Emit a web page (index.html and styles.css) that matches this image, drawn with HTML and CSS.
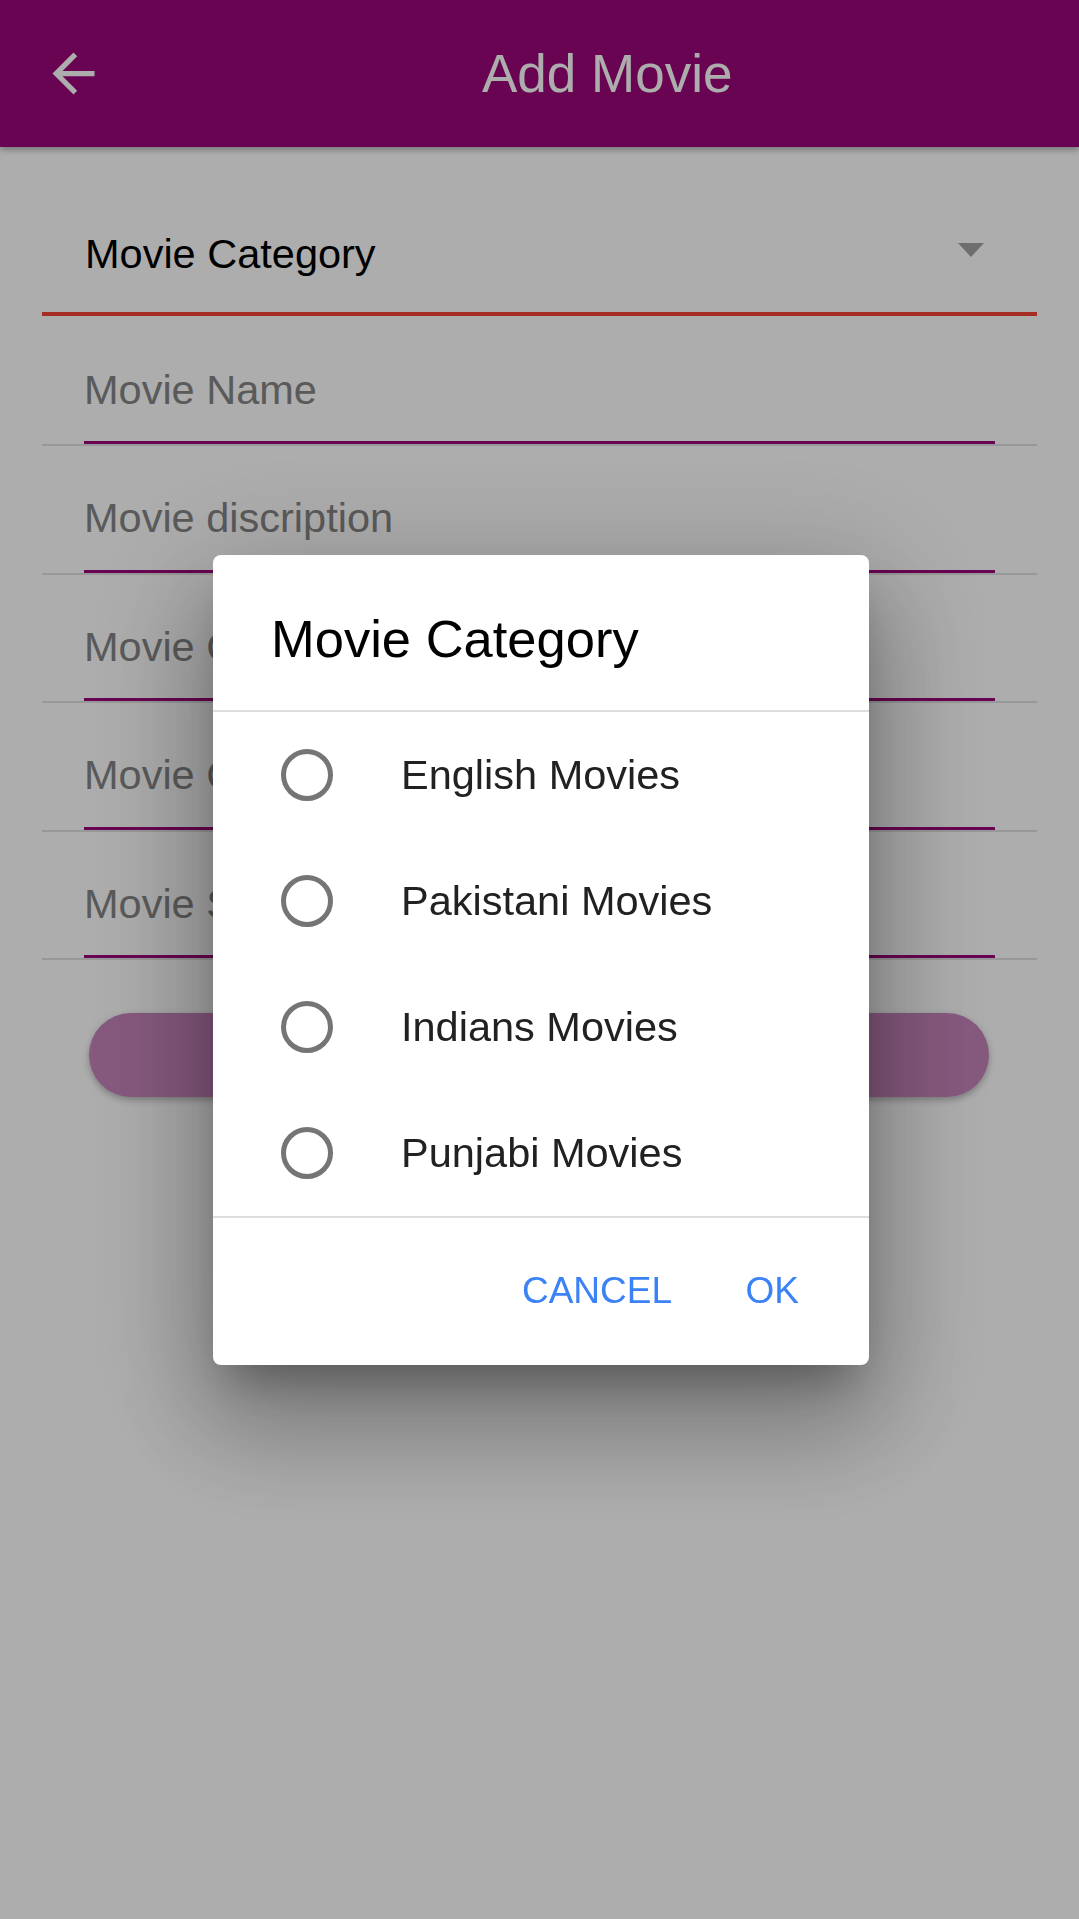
FILE: index.html
```html
<!DOCTYPE html>
<html lang="en">
<head>
<meta charset="utf-8">
<title>Add Movie</title>
<link rel="stylesheet" href="styles.css">
</head>
<body>
<div class="screen">
  <header class="appbar">
    <svg class="back" viewBox="0 0 24 24" aria-hidden="true"><path d="M20 11H7.83l5.59-5.59L12 4l-8 8 8 8 1.41-1.41L7.83 13H20v-2z"/></svg>
    <h1 class="title">Add Movie</h1>
  </header>
  <main class="form">
    <div class="dropdown">
      <span class="dropdown-value">Movie Category</span>
      <span class="caret"></span>
    </div>
    <div class="fields">
      <div class="field"><div class="input">Movie Name</div></div>
      <div class="field"><div class="input">Movie discription</div></div>
      <div class="field"><div class="input">Movie Cast</div></div>
      <div class="field"><div class="input">Movie Country</div></div>
      <div class="field"><div class="input">Movie Status</div></div>
    </div>
    <button class="submit" type="button"></button>
  </main>
</div>

<div class="scrim">
  <div class="dialog">
    <h2 class="dialog-title">Movie Category</h2>
    <div class="divider"></div>
    <ul class="options">
      <li class="option"><span class="radio"></span><span class="option-label">English Movies</span></li>
      <li class="option"><span class="radio"></span><span class="option-label">Pakistani Movies</span></li>
      <li class="option"><span class="radio"></span><span class="option-label">Indians Movies</span></li>
      <li class="option"><span class="radio"></span><span class="option-label">Punjabi Movies</span></li>
    </ul>
    <div class="divider"></div>
    <div class="actions">
      <button class="action" type="button">CANCEL</button>
      <button class="action" type="button">OK</button>
    </div>
  </div>
</div>
</body>
</html>
```

FILE: styles.css
```css
* { box-sizing: border-box; }

html, body {
  margin: 0;
  padding: 0;
  background: #ffffff;
  font-family: "Liberation Sans", Arial, sans-serif;
}

.screen {
  min-height: 1919px;
  background: #ffffff;
}

.appbar {
  height: 147px;
  background: #9a0779;
  display: flex;
  align-items: center;
  padding-left: 42px;
  box-shadow: 0 3px 6px rgba(0, 0, 0, 0.3);
  position: relative;
  z-index: 1;
}

.back {
  width: 63px;
  height: 63px;
  fill: #ffffff;
  flex: none;
}

.title {
  margin: 0 0 0 377px;
  font-size: 53px;
  font-weight: normal;
  line-height: 62px;
  color: #ffffff;
}

.form {
  padding: 0 42px;
}

.dropdown {
  display: flex;
  align-items: flex-start;
  justify-content: space-between;
  padding: 83px 53px 34px 43px;
  border-bottom: 4px solid #f44336;
}

.dropdown-value {
  font-size: 41.5px;
  line-height: 48px;
  color: #000000;
}

.caret {
  margin-top: 13px;
  width: 0;
  height: 0;
  border-left: 13px solid transparent;
  border-right: 13px solid transparent;
  border-top: 14px solid #a3a3a3;
}

.fields {
  margin-top: 1.5px;
}

.field {
  border-bottom: 2px solid #e0e0e0;
}

.input {
  margin: 0 42px;
  padding: 48px 0 27.5px;
  border-bottom: 3px solid #9a0779;
  font-size: 41.5px;
  line-height: 48px;
  color: #858585;
  white-space: nowrap;
}

.submit {
  display: block;
  width: 900px;
  height: 84px;
  margin: 53px 0 0 47px;
  border: none;
  border-radius: 42px;
  background: #c684bb;
  box-shadow: 0 3px 7px rgba(0, 0, 0, 0.28);
}

.scrim {
  position: fixed;
  inset: 0;
  z-index: 10;
  background: rgba(0, 0, 0, 0.32);
  display: flex;
  align-items: center;
  justify-content: center;
}

.dialog {
  width: 656px;
  margin-left: 3px;
  background: #ffffff;
  border-radius: 8px;
  box-shadow:
    0 29px 40px -16px rgba(0, 0, 0, 0.28),
    0 63px 100px 10px rgba(0, 0, 0, 0.2),
    0 24px 120px 24px rgba(0, 0, 0, 0.16);
}

.dialog-title {
  margin: 0;
  padding: 54px 0 41px 58px;
  font-size: 52.5px;
  font-weight: normal;
  line-height: 60px;
  color: #000000;
}

.divider {
  height: 2px;
  background: #dddddd;
}

.options {
  list-style: none;
  margin: 0;
  padding: 0;
}

.option {
  height: 126px;
  display: flex;
  align-items: center;
}

.radio {
  width: 52px;
  height: 52px;
  margin-left: 68px;
  border: 5px solid #757575;
  border-radius: 50%;
  flex: none;
}

.option-label {
  margin-left: 68px;
  font-size: 41.5px;
  line-height: 48px;
  color: #212121;
}

.actions {
  height: 147px;
  display: flex;
  align-items: center;
  justify-content: flex-end;
  gap: 73.5px;
  padding-right: 70px;
}

.action {
  padding: 0;
  margin: 0;
  border: none;
  background: transparent;
  font-family: "Liberation Sans", Arial, sans-serif;
  font-size: 37px;
  line-height: 44px;
  color: #3b82f6;
}
```
